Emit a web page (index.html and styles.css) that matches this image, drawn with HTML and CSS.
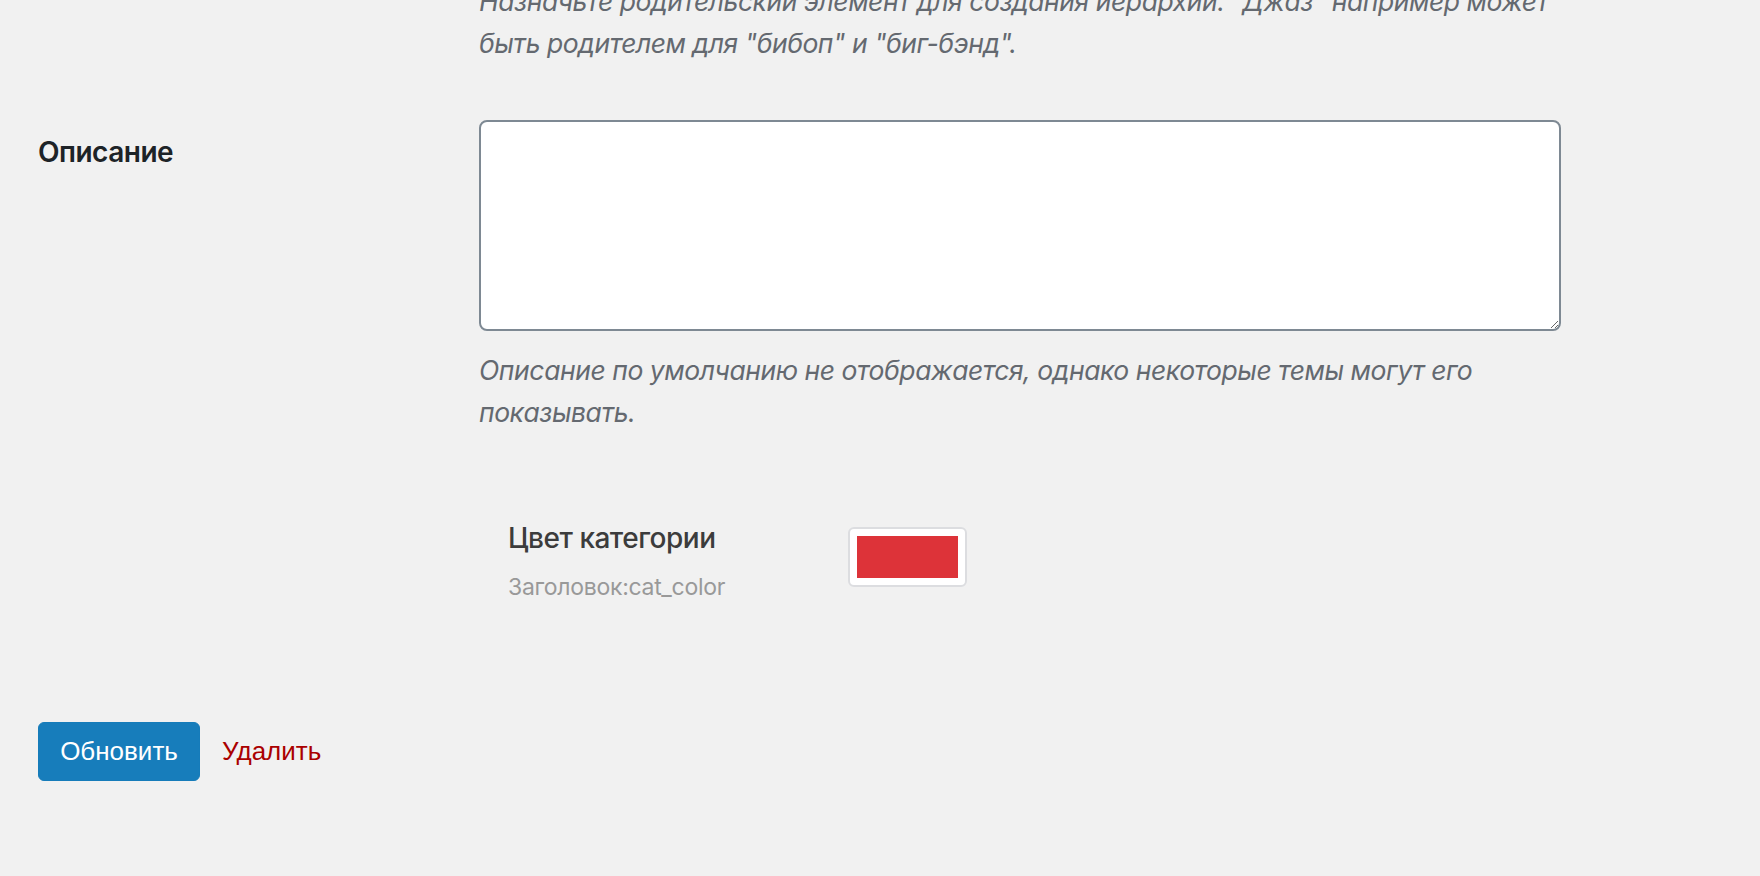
FILE: index.html
```html
<!DOCTYPE html>
<html lang="ru">
<head>
    <meta charset="UTF-8">
    <meta name="viewport" content="width=device-width, initial-scale=1.0">
    <title>Изменить рубрику</title>
    <link rel="stylesheet" href="styles.css">
</head>
<body>
    <form class="term-form">
        <div class="form-row form-row-top">
            <div class="form-label"></div>
            <div class="form-field">
                <p class="description">Назначьте родительский элемент для создания иерархии. "Джаз" например может быть родителем для "бибоп" и "биг-бэнд".</p>
            </div>
        </div>

        <div class="form-row">
            <label class="form-label" for="description">Описание</label>
            <div class="form-field">
                <textarea id="description" name="description" class="field-textarea"></textarea>
                <p class="description description-after">Описание по умолчанию не отображается, однако некоторые темы могут его показывать.</p>
            </div>
        </div>

        <div class="form-row">
            <div class="form-label"></div>
            <div class="form-field">
                <div class="meta-field">
                    <div class="meta-name">
                        <div class="meta-title">Цвет категории</div>
                        <div class="meta-key">Заголовок:cat_color</div>
                    </div>
                    <div class="color-box">
                        <span class="color-swatch"></span>
                    </div>
                </div>
            </div>
        </div>

        <div class="form-actions">
            <button type="button" class="button-primary">Обновить</button>
            <a href="#" class="delete-link">Удалить</a>
        </div>
    </form>
</body>
</html>
```

FILE: styles.css
```css
body {
    margin: 0;
    padding: 0 38px;
    background-color: #f1f1f1;
    font-family: Inter, "Noto Sans", sans-serif;
    color: #1d2327;
    overflow: hidden;
}
.term-form {
    margin-top: -20px;
}
.form-row {
    display: grid;
    grid-template-columns: 441px 1082px;
}
.form-row-top {
    padding-bottom: 56px;
}
.form-label {
    padding-top: 14px;
    font-size: 28px;
    line-height: 36px;
    font-weight: 600;
    letter-spacing: -0.5px;
    color: #1d2327;
}
.description {
    margin: 0;
    font-size: 26.5px;
    line-height: 42px;
    font-style: italic;
    letter-spacing: -0.45px;
    color: #646970;
}
.description-after {
    margin-top: 18px;
}
.field-textarea {
    display: block;
    box-sizing: border-box;
    width: 1082px;
    height: 211px;
    margin: 0;
    border: 2px solid #7e8993;
    border-radius: 8px;
    background-color: #fff;
}

/* custom field */
.meta-field {
    display: flex;
    padding: 87px 0 0 29px;
}
.meta-name {
    width: 340px;
}
.meta-title {
    font-size: 28px;
    line-height: 36px;
    font-weight: 500;
    letter-spacing: -0.5px;
    color: #3c3c3c;
}
.meta-key {
    margin-top: 16px;
    font-size: 23px;
    line-height: 30px;
    letter-spacing: -0.3px;
    color: #999;
}
.color-box {
    box-sizing: border-box;
    width: 119px;
    height: 60px;
    margin-top: 7px;
    padding: 7px;
    border: 2px solid #dcdde0;
    border-radius: 6px;
    background-color: #fff;
}
.color-swatch {
    display: block;
    height: 100%;
    background-color: #dd3339;
}

.form-actions {
    display: flex;
    align-items: center;
    gap: 22px;
    margin-top: 120px;
}
.button-primary {
    width: 162px;
    height: 59px;
    border: 1px solid #167cba;
    border-radius: 6px;
    background-color: #177dbb;
    color: #fff;
    font-family: "Liberation Sans", Arial, sans-serif;
    font-size: 26px;
}
.delete-link {
    color: #a00;
    text-decoration: none;
    font-family: "Liberation Sans", Arial, sans-serif;
    font-size: 26px;
}
```
